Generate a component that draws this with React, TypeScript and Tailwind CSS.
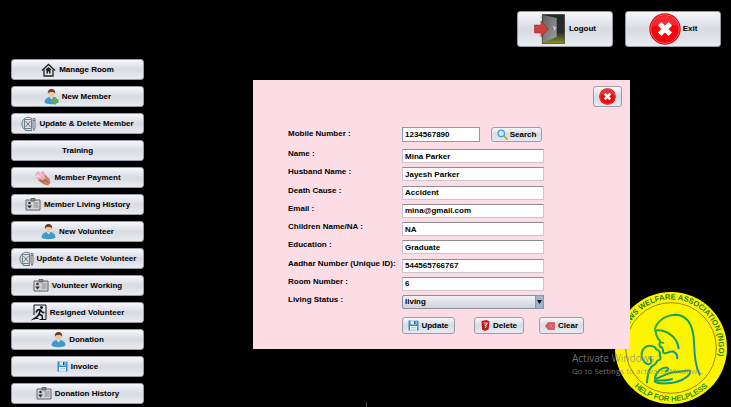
import type { ReactNode } from "react";

const nimbus =
  "flex items-center justify-center rounded-[3px] border border-[#9a9ca6] bg-linear-to-b from-[#f6f7fa] via-[#d9dbe3] to-[#e9ebf1] whitespace-nowrap text-black";

function HouseIcon() {
  return (
    <svg width="15" height="14" viewBox="0 0 30 28" fill="none" stroke="#222" strokeWidth="2.6">
      <path d="M2 15 15 3l13 12" />
      <path d="M6 13v13h18V13" />
      <path d="M15 8l6 5-2 2v6h-3v-4h-2v4h-3v-6l-2-2z" fill="#222" stroke="none" />
    </svg>
  );
}

function PersonIcon({ plus = false }: { plus?: boolean }) {
  return (
    <svg width="15" height="16" viewBox="0 0 30 32">
      <path d="M1 27C1 19 7 17 11 16h8c5 1 10 4 10 11-4 4-24 5-28 0z" fill="#4298c8" />
      <path d="M11 16l4 5 4-5z" fill="#d8eef8" />
      <path d="M9 8c0-3 3-5 6-5s6 2 6 5c0 5-3 9-6 9s-6-4-6-9z" fill="#f1c7a0" />
      <path d="M8 10C6 3 11 0 15 0s9 3 7 10c-1-4-4-4-7-4s-6 0-7 4z" fill="#6b3f22" />
      {plus && <path d="M19 16h5v5h5v5h-5v5h-5v-5h-5v-5h5z" fill="#65b52c" />}
    </svg>
  );
}

function EditIcon() {
  return (
    <svg width="15" height="16" viewBox="0 0 30 32" fill="none" stroke="#5d7381" strokeWidth="1.8">
      <path d="M22 5C13-1 2 5 2 16s11 17 20 11" />
      <path d="M7 7h14v18H7zM9 10l10 12M19 10 9 22" />
      <path d="M24 5h4v19l-2 5-2-5zM24 9h4M8 29h14" />
    </svg>
  );
}

function PaymentIcon() {
  return (
    <svg width="17" height="16" viewBox="0 0 34 32">
      <path d="M2 9l6-7 5 3 5-4 5 8-2 9-7 3-9-4z" fill="#f0a9c4" />
      <path d="M5 9l8 6M11 4l6 9M4 14l9-2" stroke="#fbe0ea" strokeWidth="2" />
      <path d="M9 17l8 3 6-4-3-5 3-1 8 8 2 8-5 5-8-2-12-8z" fill="#c98560" />
      <path d="M17 22l7-1 5 4M12 20l8 6" stroke="#8a4d34" strokeWidth="1.4" fill="none" />
    </svg>
  );
}

function CardIcon() {
  return (
    <svg width="16" height="13" viewBox="0 0 32 26" fill="none" stroke="#666" strokeWidth="2">
      <path d="M2 4h28v20H2z" fill="#d4d5da" />
      <path d="M12 4V1h8v5h-8z" fill="#888" />
      <circle cx="9" cy="10" r="2.6" fill="#333" stroke="none" />
      <path d="M4 15h10l-5 6z" fill="#333" stroke="none" />
      <path d="M17 10h10M17 14h10M17 18h10" stroke="#888" />
    </svg>
  );
}

function ResignIcon() {
  return (
    <svg width="16" height="17" viewBox="0 0 32 34" fill="none" stroke="#111" strokeWidth="2">
      <path d="M6 22V2h24v29H17" />
      <circle cx="21" cy="7" r="2.8" fill="#111" stroke="none" />
      <path d="M19 11l-6 1-3 5M19 11l-3 9 6 3 1 7M16 20l-4 6-7 4M19 12l4 5 4 0" strokeWidth="3" />
      <path d="M1 32l5-3h9" />
    </svg>
  );
}

function SaveIcon() {
  return (
    <svg width="11" height="11" viewBox="0 0 22 22">
      <path d="M1 1h18l2 2v18H1z" fill="#2a8fd3" />
      <path d="M5 1h12v8H5z" fill="#e4e9ee" />
      <path d="M12 2h3v6h-3z" fill="#32475a" />
      <path d="M4 12h14v9H4z" fill="#f3f5f7" />
      <path d="M6 15h10M6 18h10" stroke="#92a9bb" />
    </svg>
  );
}

function DoorIcon() {
  return (
    <svg width="31" height="30" viewBox="0 0 93 90">
      <defs>
        <linearGradient id="door" x1="0" y1="0" x2="1" y2="1">
          <stop offset="0" stopColor="#5d605e" />
          <stop offset="1" stopColor="#a0a3a1" />
        </linearGradient>
        <linearGradient id="floor" x1="0" y1="0" x2="0" y2="1">
          <stop offset="0.6" stopColor="#262a28" />
          <stop offset="1" stopColor="#8b9420" />
        </linearGradient>
      </defs>
      <path d="M25 1h67v88H25z" fill="url(#floor)" stroke="#333" strokeWidth="2" />
      <path d="M27 3l41 9v57L27 86z" fill="url(#door)" />
      <path d="M57 38l7 3-3 7" fill="none" stroke="#e6e6e6" strokeWidth="3" />
      <path d="M1 33h20V21l22 24-22 24V57H1z" fill="#ce3d42" stroke="#8f2026" strokeWidth="1.5" />
    </svg>
  );
}

function CrossIcon({ className }: { className: string }) {
  return (
    <svg className={className} viewBox="0 0 96 96">
      <circle cx="48" cy="48" r="47" fill="#c20a10" />
      <circle cx="48" cy="48" r="43" fill="#f5050c" stroke="#ff8b8b" strokeWidth="2" />
      <path d="M9 42C12 18 30 8 48 8s36 10 39 32C65 30 32 32 9 42z" fill="#fff" opacity="0.15" />
      <path d="M32 32l32 32M64 32 32 64" stroke="#fff" strokeWidth="15" />
    </svg>
  );
}

function SearchIcon() {
  return (
    <svg width="11" height="11" viewBox="0 0 22 22">
      <path d="M13 13l7 7" stroke="#e2a13a" strokeWidth="4" strokeLinecap="round" />
      <circle cx="8.500" cy="8.500" r="6.500" fill="#c5e7fa" stroke="#4ba3dc" strokeWidth="2.500" />
    </svg>
  );
}

function TrashIcon() {
  return (
    <svg width="9" height="11" viewBox="0 0 18 22">
      <path d="M1 2 11 0l6 3-2 16-8 3-5-3z" fill="#c3151e" />
      <path d="M5 6h8l-1 3-4 1M7 10l4 2-3 4" stroke="#fff" strokeWidth="1.6" fill="none" />
    </svg>
  );
}

function ClearIcon() {
  return (
    <svg width="10" height="8" viewBox="0 0 20 16">
      <path d="M6 1h13v14H6L1 8z" fill="#dc5862" stroke="#b63a48" />
      <path d="M9 5l6 6M15 5l-6 6" stroke="#e98a92" strokeWidth="1.5" />
    </svg>
  );
}

function Emblem() {
  return (
    <svg
      className="absolute right-1 bottom-1 size-28"
      viewBox="164 30 336 336"
      role="img"
      aria-label="Widows Welfare Association (NGO)"
    >
      <defs>
        <path id="ring-top" d="M192 222A143 143 0 1 1 473 222" />
        <path id="ring-bottom" d="M172 198A160 160 0 0 0 492 198" />
        <linearGradient id="figure" x1="0" y1="0" x2="1" y2="1">
          <stop offset="0" stopColor="#2fa92c" />
          <stop offset="0.5" stopColor="#12a05a" />
          <stop offset="1" stopColor="#1495b8" />
        </linearGradient>
      </defs>
      <circle cx="332" cy="198" r="168" fill="#fdf500" />
      <circle cx="332" cy="198" r="136" fill="none" stroke="#8b6a18" strokeWidth="2.5" />
      <g fontFamily="'Liberation Sans', sans-serif" fontWeight="700" fontSize="23">
        <text fill="#2d7d0a" textAnchor="end">
          <textPath href="#ring-top" startOffset="100%">WIDOWS WELFARE ASSOCIATION (NGO)</textPath>
        </text>
        <text fill="#2d8d0a" textAnchor="middle">
          <textPath href="#ring-bottom" startOffset="50%">HELP FOR HELPLESS</textPath>
        </text>
      </g>
      <g
        transform="translate(150 15)"
        fill="none"
        stroke="url(#figure)"
        strokeWidth="6"
        strokeLinecap="round"
        strokeLinejoin="round"
      >
        <path d="M134 124C142 100 170 83 196 83c36 2 50 30 54 68 3 42 2 80 18 112" />
        <path d="M134 130c30-4 66 16 71 54" />
        <path d="M136 132c0 16 8 24 14 32-4 8-4 12 0 17 2-4 6 0 8 8-2 10 6 12 14 8 10-4 18-4 22 0 6 4 7 8 7 17" />
        <path d="M148 166l12 2" strokeWidth="4" />
        <path d="M138 187c-4-12-26-14-36-4-12 12-10 32 0 42 8 7 16 10 20 2 3-8-2-8-2-16" />
        <path d="M138 187c10 4 12 12 10 18 6 8 2 12-2 14-8 0-6 10-14 14-14 6-20 20-22 53" />
        <path d="M134 272c4-20 22-32 36-30 6 2 4 8-4 12" />
        <path d="M134 276c22-6 42-22 62-21 20 0 38-8 43-4 4 14-26 34-56 37-22 2-48 2-50-6 8-4 30 2 52-6" />
      </g>
    </svg>
  );
}

const menu: { label: string; icon?: ReactNode }[] = [
  { label: "Manage Room", icon: <HouseIcon /> },
  { label: "New Member", icon: <PersonIcon plus /> },
  { label: "Update & Delete Member", icon: <EditIcon /> },
  { label: "Training" },
  { label: "Member Payment", icon: <PaymentIcon /> },
  { label: "Member Living History", icon: <CardIcon /> },
  { label: "New Volunteer", icon: <PersonIcon /> },
  { label: "Update & Delete Volunteer", icon: <EditIcon /> },
  { label: "Volunteer Working", icon: <CardIcon /> },
  { label: "Resigned Volunteer", icon: <ResignIcon /> },
  { label: "Donation", icon: <PersonIcon /> },
  { label: "Invoice", icon: <SaveIcon /> },
  { label: "Donation History", icon: <CardIcon /> },
];

const fields = [
  { id: "name", label: "Name :", value: "Mina Parker" },
  { id: "husband", label: "Husband Name :", value: "Jayesh Parker" },
  { id: "cause", label: "Death Cause :", value: "Accident" },
  { id: "email", label: "Email :", value: "mina@gmail.com" },
  { id: "children", label: "Children Name/NA :", value: "NA" },
  { id: "education", label: "Education :", value: "Graduate" },
  { id: "aadhar", label: "Aadhar Number (Unique ID):", value: "544565766767" },
  { id: "room", label: "Room Number :", value: "6" },
];

const labelClass = "w-[114px] shrink-0 whitespace-nowrap leading-[10px]";

export default function App() {
  return (
    <div className="relative flex min-h-screen flex-col gap-3 bg-black pt-[11px] pb-1 font-['Liberation_Sans',sans-serif] text-[8px] font-bold text-black">
      <header className="flex justify-end gap-3 pr-[10px]">
        <button type="button" className={`${nimbus} h-9 w-24 gap-1`}>
          <DoorIcon />
          Logout
        </button>
        <button type="button" className={`${nimbus} h-9 w-24 gap-[2px]`}>
          <CrossIcon className="size-8" />
          Exit
        </button>
      </header>

      <Emblem />

      <main className="relative flex items-start">
        <nav className="ml-[11px] flex w-[133px] shrink-0 flex-col gap-[6px]">
          {menu.map((item) => (
            <button key={item.label} type="button" className={`${nimbus} h-[21px] gap-[3px]`}>
              {item.icon}
              {item.label}
            </button>
          ))}
        </nav>

        <form className="mt-[21px] mr-[101px] ml-[109px] flex flex-1 flex-col bg-[#fddde5] pt-[6px] pb-[15px] pl-[35px]">
          <button type="button" aria-label="Close" className={`${nimbus} mr-2 h-[21px] w-[29px] self-end`}>
            <CrossIcon className="size-[17px]" />
          </button>

          <div className="mt-5 flex items-start">
            <label htmlFor="mobile" className={`${labelClass} mt-[2px]`}>
              Mobile Number :
            </label>
            <input
              id="mobile"
              defaultValue="1234567890"
              className="h-[15px] w-[78px] border border-[#7f9dc4] bg-white px-[2px] outline-none"
            />
            <button type="button" className={`${nimbus} ml-[11px] h-[15px] w-[51px] gap-[2px]`}>
              <SearchIcon />
              Search
            </button>
          </div>

          <div className="mt-[7px] flex h-40 flex-col justify-between">
            {fields.map((field) => (
              <div key={field.id} className="flex items-start">
                <label htmlFor={field.id} className={labelClass}>
                  {field.label}
                </label>
                <input
                  id={field.id}
                  defaultValue={field.value}
                  className="h-[14px] w-[142px] border border-[#d0c4cb] border-t-[#8f8c93] bg-white px-[2px] outline-none"
                />
              </div>
            ))}
            <div className="flex items-start">
              <label htmlFor="status" className={labelClass}>
                Living Status :
              </label>
              <div className="relative flex">
                <select
                  id="status"
                  className="h-[14px] w-[142px] appearance-none rounded-[2px] border border-[#8c8f9b] bg-linear-to-b from-[#f1f2f6] to-[#cfd2dc] px-[2px] leading-[10px]"
                >
                  <option>living</option>
                </select>
                <svg className="pointer-events-none absolute top-0 right-0 h-[14px] w-[9px]" viewBox="0 0 9 14">
                  <rect width="9" height="14" rx="2" fill="#9db4c9" stroke="#6c8198" />
                  <path d="M2 5h5L4.500 9z" fill="#111" />
                </svg>
              </div>
            </div>
          </div>

          <div className="mt-2 flex items-center pl-[114px]">
            <button type="button" className={`${nimbus} h-[17px] w-[53px] gap-[2px]`}>
              <SaveIcon />
              Update
            </button>
            <button type="button" className={`${nimbus} ml-[19px] h-[17px] w-[50px] gap-[3px]`}>
              <TrashIcon />
              Delete
            </button>
            <button type="button" className={`${nimbus} ml-[15px] h-[17px] w-[45px] gap-[3px]`}>
              <ClearIcon />
              Clear
            </button>
          </div>
        </form>
      </main>

      <aside className="pointer-events-none absolute right-8 bottom-8 w-[127px] font-['Open_Sans',sans-serif] font-normal whitespace-nowrap text-[#909090]/80">
        <p className="text-[10px] leading-[14px]">Activate Windows</p>
        <p className="text-[8px] leading-[11px]">Go to Settings to activate Windows.</p>
      </aside>
      <div className="absolute bottom-0 left-1/2 h-[6px] w-px bg-[#444444]" />
    </div>
  );
}
